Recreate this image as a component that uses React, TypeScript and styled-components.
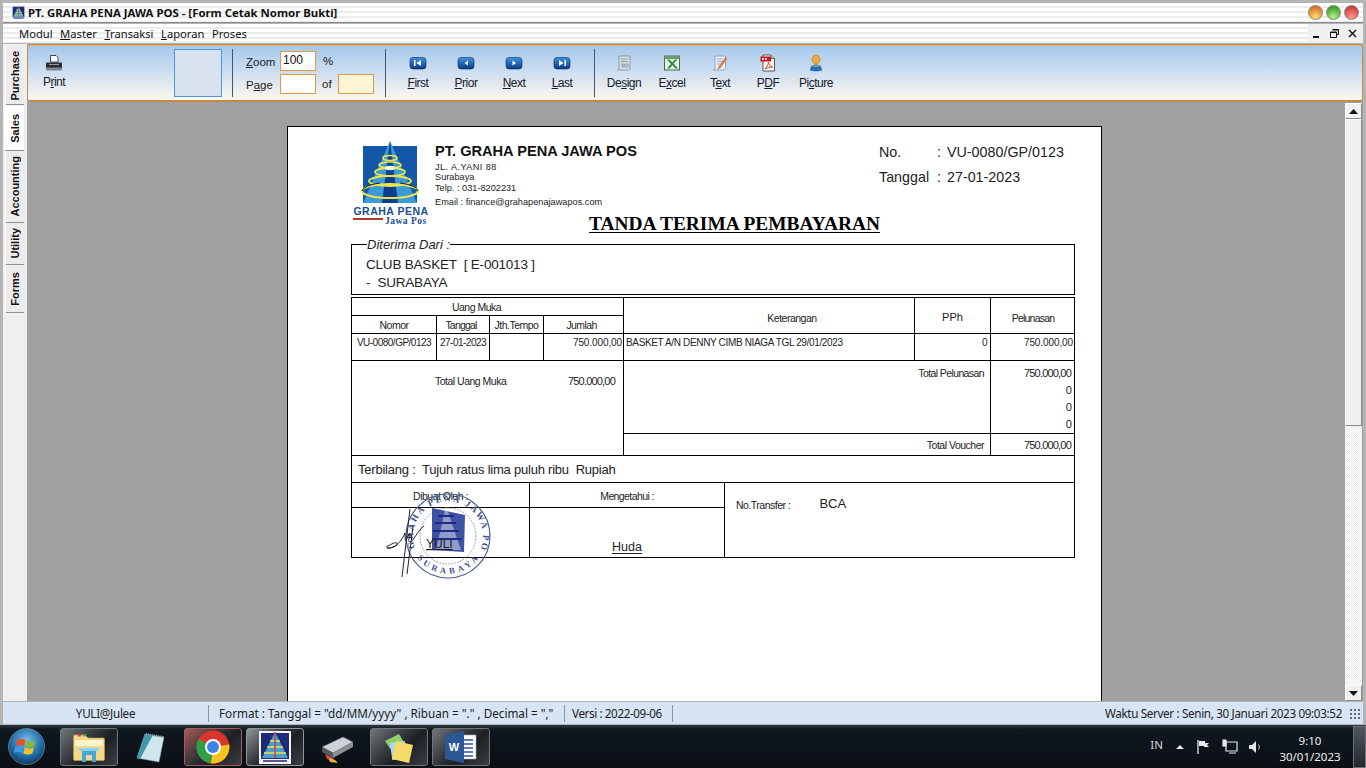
import React from 'react';
import styled, { createGlobalStyle } from 'styled-components';

const GlobalStyle = createGlobalStyle`
  html, body { margin: 0; padding: 0; height: 100%; overflow: hidden; background: #b4b4b4; }
  #root { width: 1366px; height: 768px; }
`;

const Screen = styled.div`
  width: 1366px;
  height: 768px;
  display: flex;
  flex-direction: column;
  background: #b4b4b4;
  font-family: "Noto Sans", "Liberation Sans", sans-serif;
  color: #111;
  overflow: hidden;
`;

const stripes = `repeating-linear-gradient(180deg, #ffffff 0, #ffffff 3px, #ececec 3px, #ececec 5px)`;

const TitleBar = styled.div`
  height: 19px;
  margin: 3px 3px 1px 3px;
  display: flex;
  align-items: center;
  gap: 2px;
  padding: 0 4px 0 8px;
  background: ${stripes};
  border-bottom: 1px solid #8c8c8c;
`;

const TitleText = styled.span`
  font-size: 11.4px;
  font-weight: 700;
  flex: 1;
  color: #101010;
`;

const Orbs = styled.div`
  display: flex;
  gap: 3px;
`;

const Orb = styled.span<{ $top: string; $bottom: string }>`
  width: 15px;
  height: 15px;
  border-radius: 50%;
  border: 1px solid #8a8a7a;
  box-sizing: border-box;
  background: radial-gradient(circle at 50% 85%, ${p => p.$bottom} 0, ${p => p.$top} 80%);
`;

const MenuBar = styled.div`
  height: 19px;
  margin: 0 3px;
  display: flex;
  align-items: stretch;
  background: ${stripes};
`;

const MenuItems = styled.div`
  flex: 1;
  display: flex;
  align-items: center;
  gap: 7.5px;
  padding-left: 16px;
  font-size: 11.2px;
`;

const MenuItem = styled.span`
  u { text-underline-offset: 1px; }
`;

const MdiControls = styled.div`
  width: 53px;
  background: #f0f0f0;
  display: flex;
  align-items: center;
  justify-content: space-around;
  padding-right: 2px;
`;

const Middle = styled.div`
  flex: 1;
  min-height: 0;
  display: flex;
  margin: 1px 3px 0 3px;
`;

const SideTabs = styled.div`
  width: 24px;
  flex: none;
  background: #efefef;
  display: flex;
  flex-direction: column;
  padding-top: 1px;
`;

const SideTab = styled.div<{ $h: number; $active?: boolean; $shift?: number }>`
  height: ${p => p.$h}px;
  box-sizing: border-box;
  margin: ${p => (p.$active ? '1px 3px 0 1px' : '0 3px 0 2px')};
  padding-top: ${p => p.$shift ?? 0}px;
  background: ${p => (p.$active ? '#ffffff' : '#ececec')};
  border-bottom: 1px solid #8f8f8f;
  border-left: 1px solid #ffffff;
  border-radius: 2px 0 0 2px;
  display: flex;
  align-items: center;
  justify-content: center;
  span {
    writing-mode: vertical-rl;
    transform: rotate(180deg);
    font: 700 11px "Liberation Sans", sans-serif;
    color: #111;
  }
`;

const Workspace = styled.div`
  flex: 1;
  min-width: 0;
  display: flex;
  flex-direction: column;
`;

const Toolbar = styled.div`
  height: 58px;
  box-sizing: border-box;
  flex: none;
  display: flex;
  align-items: center;
  border: 2px solid #c48a48;
  border-width: 1px 1px 2px 1px;
  border-radius: 3px;
  background: linear-gradient(180deg, #a5c8ec 0%, #c9dcef 45%, #fdf8ee 100%);
  box-shadow: inset 0 1px 0 #e6b27a;
`;

const ToolButton = styled.div<{ $w?: number; $gap?: number }>`
  width: ${p => p.$w ?? 48}px;
  flex: none;
  height: 44px;
  margin-top: 6px;
  display: flex;
  flex-direction: column;
  align-items: center;
  justify-content: flex-start;
  gap: ${p => p.$gap ?? 4}px;
  font: 12px "Liberation Sans", sans-serif;
  letter-spacing: -0.5px;
  color: #15202c;
  svg { height: 18px; width: 18px; flex: none; }
  u { text-underline-offset: 1px; }
`;

const PreviewBox = styled.div`
  width: 48px;
  height: 48px;
  box-sizing: border-box;
  margin-left: 94px;
  flex: none;
  border: 1px solid #4a98e0;
  background: #d8e2ee;
`;

const Sep = styled.div<{ $l: number; $r: number }>`
  width: 1px;
  height: 48px;
  flex: none;
  margin: 0 ${p => p.$r}px 0 ${p => p.$l}px;
  background: #44566a;
`;

const PagerGrid = styled.div`
  display: grid;
  grid-template-columns: 34px 36px 22px 36px;
  grid-template-rows: 20px 20px;
  row-gap: 3px;
  align-items: center;
  font: 11.5px "Liberation Sans", sans-serif;
  color: #222;
  u { text-underline-offset: 1px; }
`;

const PagerLabel = styled.span<{ $indent?: number; $drop?: number }>`
  padding-left: ${p => p.$indent ?? 0}px;
  padding-top: ${p => p.$drop ?? 0}px;
`;

const PagerInput = styled.div<{ $fill?: string }>`
  width: 36px;
  height: 20px;
  box-sizing: border-box;
  border: 1px solid #e09a4a;
  background: ${p => p.$fill ?? '#ffffff'};
  font: 12px "Liberation Sans", sans-serif;
  padding-left: 2px;
  line-height: 16px;
  color: #111;
`;

const Canvas = styled.div`
  flex: 1;
  min-height: 0;
  display: flex;
  background: #a0a0a0;
  padding-top: 1px;
`;

const PageArea = styled.div`
  flex: 1;
  min-width: 0;
  padding: 23px 0 0 260px;
  overflow: hidden;
`;

const Page = styled.div`
  width: 815px;
  height: 600px;
  background: #fff;
  border: 1px solid #000;
  box-sizing: border-box;
  padding: 0 0 0 63px;
  position: relative;
  font-family: "Liberation Sans", sans-serif;
  color: #111;
`;

const ReportHead = styled.div`
  display: flex;
  height: 116px;
  width: 724px;
`;

const LogoWrap = styled.div`
  width: 84px;
  flex: none;
  padding-top: 14px;
  svg { display: block; width: 80px; height: 88px; }
`;

const Company = styled.div`
  width: 444px;
  flex: none;
  padding-top: 15px;
  display: flex;
  flex-direction: column;
`;

const CompanyName = styled.div`
  font-size: 14.6px;
  font-weight: 700;
  line-height: 18px;
  margin-bottom: 2px;
`;

const CompanyLine = styled.div<{ $gap?: number; $ls?: number }>`
  font-size: 9.2px;
  line-height: 10px;
  margin-top: ${p => p.$gap ?? 0}px;
  letter-spacing: ${p => p.$ls ?? 0}px;
  color: #222;
`;

const NumberBlock = styled.div`
  padding-top: 15px;
  display: grid;
  grid-template-columns: 58px 10px auto;
  grid-auto-rows: 25px;
  font-size: 14.3px;
  color: #222;
  line-height: 20px;
  white-space: pre;
`;

const ReportTitle = styled.div`
  width: 767px;
  text-align: center;
  font: 700 19.4px "Liberation Serif", serif;
  text-decoration: underline;
  margin-top: -30px;
  height: 25px;
  color: #000;
  text-underline-offset: 2px;
`;

const ReceivedFrom = styled.fieldset`
  width: 724px;
  height: 58px;
  box-sizing: border-box;
  margin: -1px 0 0 0;
  padding: 4px 0 0 14px;
  border: 1px solid #000;
`;

const ReceivedLegend = styled.legend`
  font-size: 13px;
  font-style: italic;
  padding: 0;
  margin-left: 1px;
  color: #222;
`;

const ReceivedLine = styled.div`
  font-size: 13.5px;
  line-height: 18px;
  letter-spacing: -0.2px;
  white-space: pre;
  color: #222;
`;

const BodyGrid = styled.div`
  margin-top: 2px;
  width: 724px;
  box-sizing: border-box;
  display: grid;
  grid-template-columns: 84px 52px 53px 79px 290px 75px 83px;
  grid-template-rows: 17px 17px 26px 72px 21px 26px;
  gap: 1px;
  padding: 1px;
  background: #000;
`;

const Cell = styled.div<{
  $col: string;
  $row: string;
  $align?: string;
  $v?: string;
  $size?: number;
  $pad?: string;
  $ls?: number;
}>`
  grid-column: ${p => p.$col};
  grid-row: ${p => p.$row};
  box-sizing: border-box;
  background: #fff;
  display: flex;
  justify-content: ${p => p.$align ?? 'center'};
  align-items: ${p => p.$v ?? 'center'};
  font-size: ${p => p.$size ?? 10.5}px;
  letter-spacing: ${p => p.$ls ?? -0.5}px;
  padding: ${p => p.$pad ?? '1px 0 0 0'};
  color: #222;
  white-space: pre;
  min-width: 0;
  overflow: hidden;
`;

const TotalLeft = styled.div`
  display: grid;
  grid-template-columns: 83px 97px;
  padding: 14px 0 0 83px;
  align-content: start;
  width: 100%;
  span:last-child { text-align: right; font-size: 11px; letter-spacing: -0.8px; }
`;

const ValueStack = styled.div`
  width: 100%;
  text-align: right;
  padding: 4px 3px 0 0;
  font-size: 11px;
  letter-spacing: -0.8px;
  line-height: 17px;
  box-sizing: border-box;
`;

const SignGrid = styled.div`
  width: 724px;
  box-sizing: border-box;
  display: grid;
  grid-template-columns: 177px 194px 349px;
  grid-template-rows: 24px 49px;
  gap: 1px;
  padding: 0 1px 1px 1px;
  background: #000;
`;

const SignName = styled.span`
  font-size: 12.5px;
  letter-spacing: 0;
  text-decoration: underline;
  text-underline-offset: 2px;
`;

const TransferRow = styled.div`
  display: flex;
  align-items: center;
  padding: 13px 0 0 11px;
  gap: 29px;
  span:first-child { font-size: 10.5px; }
  span:last-child { font-size: 13px; letter-spacing: 0; margin-bottom: 3px; }
`;

const Stamp = styled.div`
  position: absolute;
  left: 108px;
  top: 359px;
  width: 112px;
  height: 100px;
  pointer-events: none;
  svg { width: 112px; height: 100px; display: block; overflow: visible; }
`;

const Scrollbar = styled.div`
  width: 17px;
  flex: none;
  margin-right: 1px;
  display: flex;
  flex-direction: column;
  background: repeating-conic-gradient(#fff 0 25%, #ececec 0 50%) 0 0 / 2px 2px;
`;

const ScrollBtn = styled.div`
  height: 16px;
  flex: none;
  box-sizing: border-box;
  background: #f0f0f0;
  border: 1px solid;
  border-color: #fff #8a8a8a #8a8a8a #fff;
  display: flex;
  align-items: center;
  justify-content: center;
  svg { width: 9px; height: 5px; }
`;

const ScrollThumb = styled.div`
  height: 307px;
  flex: none;
  box-sizing: border-box;
  background: #f0f0f0;
  border: 1px solid;
  border-color: #fff #8a8a8a #8a8a8a #fff;
`;

const ScrollTrack = styled.div`
  flex: 1;
`;

const StatusBar = styled.div`
  height: 22px;
  flex: none;
  margin: 1px 3px 1px 3px;
  background: #d6e4f3;
  display: flex;
  align-items: center;
  font-size: 11.7px;
  color: #1c1c1c;
`;

const StatusCell = styled.div<{ $w: number; $pad?: number; $center?: boolean; $ls?: number }>`
  width: ${p => p.$w}px;
  flex: none;
  box-sizing: border-box;
  height: 17px;
  line-height: 17px;
  padding-left: ${p => p.$pad ?? 0}px;
  text-align: ${p => (p.$center ? 'center' : 'left')};
  letter-spacing: ${p => p.$ls ?? 0}px;
  border-right: 1px solid #8b95a0;
  white-space: pre;
`;

const StatusRight = styled.div`
  margin-left: auto;
  padding-right: 3px;
  white-space: pre;
  display: flex;
  gap: 7px;
  align-items: center;
  letter-spacing: -0.35px;
`;

const Grip = styled.span`
  width: 11px;
  height: 11px;
  flex: none;
  background: radial-gradient(#667 0 1px, transparent 1px) 0 0 / 4px 4px;
`;

const Taskbar = styled.div`
  height: 43px;
  flex: none;
  display: flex;
  align-items: center;
  padding-left: 60px;
  position: relative;
  background: linear-gradient(180deg, #2c3a46 0, #0f1820 4px, #0b0f14 100%);
  color: #fff;
`;

const StartOrb = styled.div`
  position: absolute;
  left: 8px;
  top: 3px;
  width: 37px;
  height: 37px;
  svg { width: 37px; height: 37px; display: block; }
`;

const TaskButtons = styled.div`
  display: flex;
  gap: 4px;
`;

const TaskButton = styled.div<{ $open?: boolean; $tint?: string }>`
  width: 58px;
  height: 38px;
  box-sizing: border-box;
  display: flex;
  align-items: center;
  justify-content: center;
  border-radius: 3px;
  border: 1px solid ${p => (p.$open ? p.$tint ?? '#6f7479' : 'transparent')};
  background: ${p =>
    p.$open
      ? `linear-gradient(135deg, ${p.$tint ?? '#71767b'} 0%, #2e3236 45%, #1d2023 60%, #3a3e42 100%)`
      : 'transparent'};
  svg { width: 36px; height: 36px; display: block; }
`;

const Tray = styled.div`
  margin-left: auto;
  display: flex;
  align-items: center;
  height: 100%;
`;

const TrayLang = styled.span`
  font-size: 11.5px;
  color: #d4d8dc;
  margin-right: 11px;
  margin-top: -4px;
`;

const TrayIcons = styled.div`
  display: flex;
  align-items: center;
  gap: 10px;
  svg { display: block; }
`;

const Clock = styled.div`
  width: 76px;
  margin-left: 8px;
  padding-top: 5px;
  text-align: center;
  font-size: 11.5px;
  line-height: 16px;
  color: #f0f0f0;
`;

const ShowDesktop = styled.div`
  width: 13px;
  height: 42px;
  margin-left: 5px;
  box-sizing: border-box;
  border: 1px solid #6c7278;
  background: linear-gradient(180deg, #50565c, #24282c);
`;

const tabs = [
  { name: 'Purchase', h: 60, shift: 3 },
  { name: 'Sales', h: 45, active: true },
  { name: 'Accounting', h: 72 },
  { name: 'Utility', h: 42 },
  { name: 'Forms', h: 48 },
];

const Logo = () => (
  <svg viewBox="0 0 80 88">
    <rect x="12" y="5" width="54" height="57" fill="#1257a8" />
    <polygon points="39,0 66,62 12,62" fill="#3c9ad8" />
    <polygon points="39,0 47,62 31,62" fill="#0b3f8f" />
    <ellipse cx="39" cy="17" rx="7" ry="2.500" fill="none" stroke="#e9e44c" strokeWidth="1.600" />
    <ellipse cx="39" cy="24" rx="11" ry="3" fill="none" stroke="#e9e44c" strokeWidth="1.600" />
    <ellipse cx="39" cy="31" rx="15" ry="4" fill="none" stroke="#e9e44c" strokeWidth="1.800" />
    <ellipse cx="39" cy="27" rx="5" ry="2.200" fill="#fdf8d8" />
    <ellipse cx="39" cy="40" rx="21" ry="5" fill="none" stroke="#e9e44c" strokeWidth="2" />
    <ellipse cx="39" cy="50" rx="28" ry="7" fill="none" stroke="#e9e44c" strokeWidth="2.200" />
    <path d="M11 50 A28 9 0 0 1 29 42" fill="none" stroke="#10202a" strokeWidth="1" />
    <path d="M67 50 A28 9 0 0 0 49 42" fill="none" stroke="#10202a" strokeWidth="1" />
    <text x="40" y="74" textAnchor="middle" fontFamily="Liberation Sans" fontWeight="700" fontSize="10.500" fill="#15508f" letterSpacing="0.500">GRAHA PENA</text>
    <rect x="2" y="77" width="30" height="2" fill="#b23a24" />
    <text x="34" y="83" fontFamily="Liberation Serif" fontWeight="700" fontSize="9.500" fill="#15508f" letterSpacing="0.500">Jawa Pos</text>
  </svg>
);

const NavIcon = ({ kind }: { kind: 'first' | 'prior' | 'next' | 'last' }) => (
  <svg viewBox="0 0 18 18">
    <defs>
      <linearGradient id="navFill" x1="0" y1="0" x2="0" y2="1">
        <stop offset="0" stopColor="#3f94e0" />
        <stop offset="1" stopColor="#0c3a84" />
      </linearGradient>
    </defs>
    <rect x="1" y="3.500" width="16" height="11.500" rx="3" fill="url(#navFill)" stroke="#0a2a60" strokeWidth="0.600" />
    {kind === 'first' && <path d="M5 6h1.500v6H5zM12 6v6L7.500 9z" fill="#fff" />}
    {kind === 'prior' && <path d="M11 6.500v5L7.500 9z" fill="#e6f0fa" />}
    {kind === 'next' && <path d="M7.500 6.500v5L11 9z" fill="#fff" />}
    {kind === 'last' && <path d="M6 6v6l4.500-3zM11.500 6H13v6h-1.500z" fill="#fff" />}
  </svg>
);

const PrintIcon = () => (
  <svg viewBox="0 0 18 18">
    <path d="M5.500 1.500h5.500l2 2V8h-7.500z" fill="#fff" stroke="#30343a" strokeWidth="0.900" />
    <path d="M2 8.500h14c.6 0 1 .5 1 1V14H1V9.500c0-.5.4-1 1-1z" fill="#2a2e34" />
    <rect x="1" y="13.500" width="16" height="3" rx="1" fill="#7f8690" />
    <rect x="4" y="10" width="10" height="1" fill="#8f959c" />
  </svg>
);

const DesignIcon = () => (
  <svg viewBox="0 0 18 18">
    <path d="M4 2h11v12.500c0 1-.6 1.500-1.500 1.500H2.500C3.500 16 4 15.400 4 14.500z" fill="#d5dce2" stroke="#7a8a98" strokeWidth="0.800" />
    <path d="M6 5h7M6 7.500h7M7 10h2v3H7zM10 10h3v3h-3z" stroke="#8596a5" strokeWidth="0.900" fill="none" />
  </svg>
);

const ExcelIcon = () => (
  <svg viewBox="0 0 18 18">
    <rect x="1.500" y="2" width="15" height="14" fill="#e4efe0" stroke="#3f6f45" strokeWidth="1" />
    <rect x="1.500" y="2" width="15" height="3" fill="#6f9b6f" />
    <path d="M4 5.500l4 4.500-4 4.500h2.500L9.500 11l3 3.500H15L10.500 9.500 14.500 5.500H12L9.300 8.500 6.500 5.500z" fill="#1f8a3c" />
  </svg>
);

const TextIcon = () => (
  <svg viewBox="0 0 18 18">
    <path d="M4 2h10.500v12.500L13 16H2.500L4 14z" fill="#e6ebf3" stroke="#8c98ac" strokeWidth="0.800" />
    <path d="M6 5h6M6 7.500h6M6 10h4" stroke="#98a4b6" strokeWidth="0.800" />
    <path d="M14.500 3.500L8 12.500l-1 2.500 2.300-1.300 6.500-9z" fill="#e58a3c" stroke="#a9561f" strokeWidth="0.500" />
  </svg>
);

const PdfIcon = () => (
  <svg viewBox="0 0 18 18">
    <path d="M4 1h8l3.500 3.500V17H4z" fill="#fbf7f0" stroke="#353535" strokeWidth="0.800" />
    <path d="M12 1v3.500h3.500" fill="#c8c8c8" stroke="#353535" strokeWidth="0.600" />
    <rect x="1.500" y="2.500" width="10.500" height="5" fill="#c8151b" />
    <rect x="3.200" y="4" width="1.800" height="1.800" fill="#fff" />
    <rect x="6" y="4" width="1.800" height="1.800" fill="#fff" />
    <path d="M6 15c2-2 3-4 3.500-6.500.5 2.500 2 4 4 4.500-3 0-5.500 1-7.500 2z" fill="none" stroke="#c8151b" strokeWidth="0.800" />
  </svg>
);

const PictureIcon = () => (
  <svg viewBox="0 0 18 18">
    <ellipse cx="9" cy="5.500" rx="4" ry="4.500" fill="#f0a83c" stroke="#b06a10" strokeWidth="0.500" />
    <path d="M3 16.500c0-4 2.500-6 6-6s6 2 6 6c-2 1-10 1-12 0z" fill="#2a6ec0" />
    <path d="M6 10.500c1 1.500 5 1.500 6 0v1.500c-1 1-5 1-6 0z" fill="#f0a83c" />
  </svg>
);

const StampMark = () => (
  <svg viewBox="0 0 112 100">
    <defs>
      <path id="stampTop" d="M19 62 A35 35 0 1 1 85 62" />
      <path id="stampBottom" d="M20 70 A38 38 0 0 0 84 70" />
    </defs>
    <circle cx="52" cy="50" r="42" fill="none" stroke="#4a5f96" strokeWidth="1.200" />
    <circle cx="52" cy="50" r="28" fill="none" stroke="#5a6da0" strokeWidth="0.800" strokeDasharray="1.500 1.500" />
    <text fontFamily="Liberation Serif" fontSize="9" fontWeight="700" fill="#3c4f8a" letterSpacing="2">
      <textPath href="#stampTop">GRAHA PENA JAWA POS</textPath>
    </text>
    <text fontFamily="Liberation Serif" fontSize="8.500" fontWeight="700" fill="#3c4f8a" letterSpacing="3.500">
      <textPath href="#stampBottom" startOffset="3%">SURABAYA</textPath>
    </text>
    <polygon points="36,22 69,29 68,66 36,64" fill="#2b3f9a" opacity="0.900" />
    <polygon points="50,20 65,64 40,64" fill="#dfe4f2" opacity="0.500" />
    <path d="M42 30h16M39 37h21M37 45h26M36 53h30" stroke="#1d2c80" strokeWidth="2.200" />
    <path d="M-10 61c4-2 8-5 11-4 2 2-6 6-10 5 9 1 15-8 18-15 1 8-2 12 5 0 0 5-3 9 0 9s8-12 14-16M14 23L6 91M17 40l-6 48" fill="none" stroke="#22222e" strokeWidth="1" />
    <text x="30" y="62" fontFamily="Liberation Sans" fontSize="12" fill="#222" textDecoration="underline">YULI</text>
  </svg>
);

const StartLogo = () => (
  <svg viewBox="0 0 37 37">
    <defs>
      <radialGradient id="orbFill" cx="50%" cy="35%" r="70%">
        <stop offset="0" stopColor="#7cc0e8" />
        <stop offset="0.600" stopColor="#1f6ea8" />
        <stop offset="1" stopColor="#0a2c50" />
      </radialGradient>
    </defs>
    <circle cx="18.500" cy="18.500" r="18" fill="url(#orbFill)" stroke="#8aa0b0" strokeWidth="0.600" />
    <path d="M9 12c3-1.500 6-1.500 8.500 0l-1.500 6c-2.500-1.500-5-1.500-8.500 0z" fill="#e8502c" />
    <path d="M18.500 12.500c3 1.500 6 1.500 9 0l-1.500 6c-3 1.500-6 1.500-9 0z" fill="#7fbc3c" />
    <path d="M7.300 19c3-1.500 6-1.500 8.500 0l-1.500 6c-2.500-1.500-5.500-1.500-8.500 0z" fill="#3d9ae0" />
    <path d="M16.800 19.500c3 1.500 6 1.500 9 0l-1.500 6c-3 1.500-6 1.500-9 0z" fill="#f4c22c" />
  </svg>
);

const FolderIcon = () => (
  <svg viewBox="0 0 36 36">
    <path d="M3 6h11l3 3h15c1 0 1.500.5 1.500 1.500V30c0 1-.5 1.500-1.500 1.500H4c-1 0-1.500-.5-1.500-1.500V7z" fill="#f2d98a" stroke="#b99a48" strokeWidth="0.700" />
    <rect x="4" y="11" width="28" height="6" fill="#fdf3c8" />
    <rect x="7" y="5" width="3" height="2.500" fill="#d8453a" />
    <rect x="12" y="5" width="3" height="2.500" fill="#5aa83c" />
    <path d="M11 33V23c0-1 .5-1.500 1.500-1.500h11c1 0 1.500.5 1.500 1.500v10h-4v-7h-6v7z" fill="#49a6d8" />
    <rect x="8" y="19" width="20" height="3" rx="1" fill="#8fd0ee" />
  </svg>
);

const NotepadIcon = () => (
  <svg viewBox="0 0 36 36">
    <path d="M12 5l19 3-5 25-22-4z" fill="#cfe6ee" stroke="#7a98a8" strokeWidth="0.600" />
    <path d="M12 5l8 1-13 24-3-1z" fill="#3f9aa8" />
    <path d="M13 5l17 3" stroke="#8a9aa0" strokeWidth="2" strokeDasharray="1 1" />
  </svg>
);

const ChromeIcon = () => (
  <svg viewBox="0 0 36 36">
    <circle cx="18" cy="18" r="16.500" fill="#d9352c" />
    <path d="M18 18L3.500 10A16.500 16.500 0 0 0 16 34.400z" fill="#2f9e44" />
    <path d="M18 18l16.200-2.500A16.500 16.500 0 0 1 16 34.400z" fill="#f6c51c" />
    <circle cx="18" cy="18" r="8" fill="#fff" />
    <circle cx="18" cy="18" r="6" fill="#3f82e8" />
  </svg>
);

const AppIcon = () => (
  <svg viewBox="0 0 36 36">
    <rect x="2" y="2" width="32" height="33" fill="#f4f4f4" />
    <rect x="4" y="4" width="28" height="26" fill="#1c2a78" />
    <polygon points="18,3 31,29 5,29" fill="#4ca0c8" />
    <path d="M13 12h10M10 18h16M7 24h22" stroke="#e9e44c" strokeWidth="1.500" />
    <path d="M18 3v26" stroke="#c83a5a" strokeWidth="1.500" />
    <rect x="6" y="31" width="24" height="2" fill="#5a5a8a" />
  </svg>
);

const ScannerIcon = () => (
  <svg viewBox="0 0 36 36">
    <path d="M3 18l21-10 10 5-20 11z" fill="#cfd2d6" stroke="#66696e" strokeWidth="0.600" />
    <path d="M3 18l11 6v5L3 23z" fill="#55585c" />
    <path d="M14 24l20-11v5L14 29z" fill="#8b8e92" />
    <path d="M6 25l8 4 1 4-7-3z" fill="#d84a3a" />
    <path d="M10 29l6 2 3 3-8-1z" fill="#e8b83a" />
  </svg>
);

const NotesIcon = () => (
  <svg viewBox="0 0 36 36">
    <path d="M4 12l14-7 7 12-13 7z" fill="#8ed06a" />
    <rect x="10" y="13" width="15" height="17" fill="#a8d8f0" transform="rotate(-8 17 21)" />
    <path d="M15 12l17 4-4 18-17-4z" fill="#f5dc68" />
  </svg>
);

const WordIcon = () => (
  <svg viewBox="0 0 36 36">
    <rect x="15" y="6" width="18" height="24" fill="#fff" stroke="#9aa6b8" strokeWidth="0.600" />
    <path d="M18 11h12M18 15h12M18 19h12M18 23h12M18 27h12" stroke="#2b5797" strokeWidth="1.600" />
    <path d="M2 6l19-4v32L2 30z" fill="#2b5797" />
    <text x="11" y="22" textAnchor="middle" fontFamily="Liberation Sans" fontWeight="700" fontSize="11" fill="#fff">W</text>
  </svg>
);

export default function App() {
  return (
    <Screen>
      <GlobalStyle />
      <TitleBar>
        <svg width="15" height="15" viewBox="0 0 36 36"><AppIcon /></svg>
        <TitleText>PT. GRAHA PENA JAWA POS - [Form Cetak Nomor Bukti]</TitleText>
        <Orbs>
          <Orb $top="#d8702c" $bottom="#ffe070" />
          <Orb $top="#3c9a2c" $bottom="#b8f088" />
          <Orb $top="#c83c3c" $bottom="#ff9a90" />
        </Orbs>
      </TitleBar>
      <MenuBar>
        <MenuItems>
          <MenuItem>Modul</MenuItem>
          <MenuItem><u>M</u>aster</MenuItem>
          <MenuItem><u>T</u>ransaksi</MenuItem>
          <MenuItem><u>L</u>aporan</MenuItem>
          <MenuItem>Proses</MenuItem>
        </MenuItems>
        <MdiControls>
          <svg width="9" height="9" viewBox="0 0 9 9"><rect x="1" y="7" width="6" height="2" fill="#111" /></svg>
          <svg width="9" height="9" viewBox="0 0 9 9"><path d="M2.500.500h6v5h-2M.500 3h6v5.500h-6z" fill="none" stroke="#111" /><path d="M2.500 1h6M.500 3.500h6" stroke="#111" /></svg>
          <svg width="9" height="9" viewBox="0 0 9 9"><path d="M1 1l7 7M8 1L1 8" stroke="#111" strokeWidth="1.400" /></svg>
        </MdiControls>
      </MenuBar>
      <Middle>
        <SideTabs>
          {tabs.map(t => (
            <SideTab key={t.name} $h={t.h} $active={t.active} $shift={t.shift}><span>{t.name}</span></SideTab>
          ))}
        </SideTabs>
        <Workspace>
          <Toolbar>
            <ToolButton $w={52} $gap={3}><PrintIcon /><span>P<u>r</u>int</span></ToolButton>
            <PreviewBox />
            <Sep $l={10} $r={13} />
            <PagerGrid>
              <PagerLabel $drop={2}><u>Z</u>oom</PagerLabel>
              <PagerInput>100</PagerInput>
              <PagerLabel $indent={7}>%</PagerLabel>
              <span />
              <PagerLabel $drop={1}>P<u>a</u>ge</PagerLabel>
              <PagerInput />
              <PagerLabel $indent={6}>of</PagerLabel>
              <PagerInput $fill="#fff6d6" />
            </PagerGrid>
            <Sep $l={11} $r={8} />
            <ToolButton><NavIcon kind="first" /><span><u>F</u>irst</span></ToolButton>
            <ToolButton><NavIcon kind="prior" /><span><u>P</u>rior</span></ToolButton>
            <ToolButton><NavIcon kind="next" /><span><u>N</u>ext</span></ToolButton>
            <ToolButton><NavIcon kind="last" /><span><u>L</u>ast</span></ToolButton>
            <Sep $l={8} $r={5} />
            <ToolButton><DesignIcon /><span>De<u>s</u>ign</span></ToolButton>
            <ToolButton><ExcelIcon /><span>E<u>x</u>cel</span></ToolButton>
            <ToolButton><TextIcon /><span>T<u>e</u>xt</span></ToolButton>
            <ToolButton><PdfIcon /><span>P<u>D</u>F</span></ToolButton>
            <ToolButton><PictureIcon /><span>Pi<u>c</u>ture</span></ToolButton>
          </Toolbar>
          <Canvas>
            <PageArea>
              <Page>
                <ReportHead>
                  <LogoWrap><Logo /></LogoWrap>
                  <Company>
                    <CompanyName>PT. GRAHA PENA JAWA POS</CompanyName>
                    <CompanyLine $ls={0.4}>JL. A.YANI 88</CompanyLine>
                    <CompanyLine>Surabaya</CompanyLine>
                    <CompanyLine $gap={1}>Telp. : 031-8202231</CompanyLine>
                    <CompanyLine $gap={4}>Email : finance@grahapenajawapos.com</CompanyLine>
                  </Company>
                  <NumberBlock>
                    <span>No.</span><span>:</span><span>VU-0080/GP/0123</span>
                    <span>Tanggal</span><span>:</span><span>27-01-2023</span>
                  </NumberBlock>
                </ReportHead>
                <ReportTitle>TANDA TERIMA PEMBAYARAN</ReportTitle>
                <ReceivedFrom>
                  <ReceivedLegend>Diterima Dari :</ReceivedLegend>
                  <ReceivedLine>CLUB BASKET  [ E-001013 ]</ReceivedLine>
                  <ReceivedLine>-  SURABAYA</ReceivedLine>
                </ReceivedFrom>
                <BodyGrid>
                  <Cell $col="1 / 5" $row="1" $pad="1px 22px 0 0">Uang Muka</Cell>
                  <Cell $col="5" $row="1 / 3" $pad="4px 0 0 46px">Keterangan</Cell>
                  <Cell $col="6" $row="1 / 3" $size={11} $ls={0} $pad="3px 0 0 0">PPh</Cell>
                  <Cell $col="7" $row="1 / 3" $ls={-0.8} $pad="4px 0 0 1px">Pelunasan</Cell>
                  <Cell $col="1" $row="2">Nomor</Cell>
                  <Cell $col="2" $row="2" $pad="1px 4px 0 0" $ls={-0.8}>Tanggal</Cell>
                  <Cell $col="3" $row="2">Jth.Tempo</Cell>
                  <Cell $col="4" $row="2" $pad="1px 4px 0 0" $ls={-0.6}>Jumlah</Cell>
                  <Cell $col="1" $row="3" $v="flex-start" $size={10} $pad="3px 0 0 0">VU-0080/GP/0123</Cell>
                  <Cell $col="2" $row="3" $v="flex-start" $size={10} $pad="3px 0 0 0">27-01-2023</Cell>
                  <Cell $col="3" $row="3" />
                  <Cell $col="4" $row="3" $align="flex-end" $v="flex-start" $size={10} $ls={-0.1} $pad="3px 1px 0 0">750.000,00</Cell>
                  <Cell $col="5" $row="3" $align="flex-start" $v="flex-start" $size={10} $ls={-0.35} $pad="3px 0 0 2px">BASKET A/N DENNY CIMB NIAGA TGL 29/01/2023</Cell>
                  <Cell $col="6" $row="3" $align="flex-end" $v="flex-start" $size={10} $pad="3px 3px 0 0">0</Cell>
                  <Cell $col="7" $row="3" $align="flex-end" $v="flex-start" $size={10} $ls={-0.1} $pad="3px 1px 0 0">750.000,00</Cell>
                  <Cell $col="1 / 5" $row="4 / 6" $v="flex-start" $align="flex-start" $pad="0">
                    <TotalLeft><span>Total Uang Muka</span><span>750.000,00</span></TotalLeft>
                  </Cell>
                  <Cell $col="5 / 7" $row="4" $align="flex-end" $v="flex-start" $ls={-0.6} $pad="6px 6px 0 0">Total Pelunasan</Cell>
                  <Cell $col="7" $row="4" $v="flex-start" $pad="0">
                    <ValueStack>750.000,00<br />0<br />0<br />0</ValueStack>
                  </Cell>
                  <Cell $col="5 / 7" $row="5" $align="flex-end" $pad="0 6px 0 0">Total Voucher</Cell>
                  <Cell $col="7" $row="5" $align="flex-end" $size={11} $ls={-0.8} $pad="0 3px 0 0">750.000,00</Cell>
                  <Cell $col="1 / 8" $row="6" $align="flex-start" $size={13} $ls={-0.22} $pad="0 0 0 6px">Terbilang :  Tujuh ratus lima puluh ribu  Rupiah</Cell>
                </BodyGrid>
                <SignGrid>
                  <Cell $col="1" $row="1" $pad="2px 0 0 0">Dibuat Oleh :</Cell>
                  <Cell $col="2" $row="1" $pad="2px 0 0 0" $ls={-0.6}>Mengetahui :</Cell>
                  <Cell $col="3" $row="1 / 3" $align="flex-start" $v="flex-start" $pad="0">
                    <TransferRow><span>No.Transfer :</span><span>BCA</span></TransferRow>
                  </Cell>
                  <Cell $col="1" $row="2" />
                  <Cell $col="2" $row="2" $v="flex-end" $pad="0 0 3px 0"><SignName>Huda</SignName></Cell>
                </SignGrid>
                <Stamp><StampMark /></Stamp>
              </Page>
            </PageArea>
            <Scrollbar>
              <ScrollBtn><svg viewBox="0 0 9 5"><path d="M4.500 0L9 5H0z" fill="#111" /></svg></ScrollBtn>
              <ScrollThumb />
              <ScrollTrack />
              <ScrollBtn><svg viewBox="0 0 9 5"><path d="M0 0h9L4.500 5z" fill="#111" /></svg></ScrollBtn>
            </Scrollbar>
          </Canvas>
        </Workspace>
      </Middle>
      <StatusBar>
        <StatusCell $w={206} $center $ls={-0.3}>YULI@Julee</StatusCell>
        <StatusCell $w={356} $pad={10}>{'Format : Tanggal = "dd/MM/yyyy" , Ribuan = "." , Decimal = ","'}</StatusCell>
        <StatusCell $w={108} $pad={7} $ls={-0.4}>Versi : 2022-09-06</StatusCell>
        <StatusRight>Waktu Server : Senin, 30 Januari 2023 09:03:52<Grip /></StatusRight>
      </StatusBar>
      <Taskbar>
        <StartOrb><StartLogo /></StartOrb>
        <TaskButtons>
          <TaskButton $open><FolderIcon /></TaskButton>
          <TaskButton><NotepadIcon /></TaskButton>
          <TaskButton $open $tint="#a85a5a"><ChromeIcon /></TaskButton>
          <TaskButton $open $tint="#90959a"><AppIcon /></TaskButton>
          <TaskButton><ScannerIcon /></TaskButton>
          <TaskButton $open><NotesIcon /></TaskButton>
          <TaskButton $open><WordIcon /></TaskButton>
        </TaskButtons>
        <Tray>
          <TrayLang>IN</TrayLang>
          <TrayIcons>
            <svg width="12" height="12" viewBox="0 0 12 12"><path d="M6 4l4 4H2z" fill="#e8e8e8" /></svg>
            <svg width="16" height="16" viewBox="0 0 16 16"><path d="M2 1v14" stroke="#e8e8e8" strokeWidth="1.300" /><path d="M3 2h6v2h4l-2 2 2 2H8V7H3z" fill="#e8e8e8" /></svg>
            <svg width="16" height="16" viewBox="0 0 16 16"><path d="M4 3h11v9H4z" fill="none" stroke="#e8e8e8" strokeWidth="1.200" /><path d="M1 1h3v6H1zM7 14h7" stroke="#e8e8e8" strokeWidth="1.200" fill="#e8e8e8" /></svg>
            <svg width="16" height="16" viewBox="0 0 16 16"><path d="M1 6h3l4-4v12l-4-4H1z" fill="#e8e8e8" /><path d="M10.500 5.500c1 1.500 1 3.500 0 5" stroke="#c8c8c8" fill="none" /></svg>
          </TrayIcons>
          <Clock>9:10<br />30/01/2023</Clock>
          <ShowDesktop />
        </Tray>
      </Taskbar>
    </Screen>
  );
}
